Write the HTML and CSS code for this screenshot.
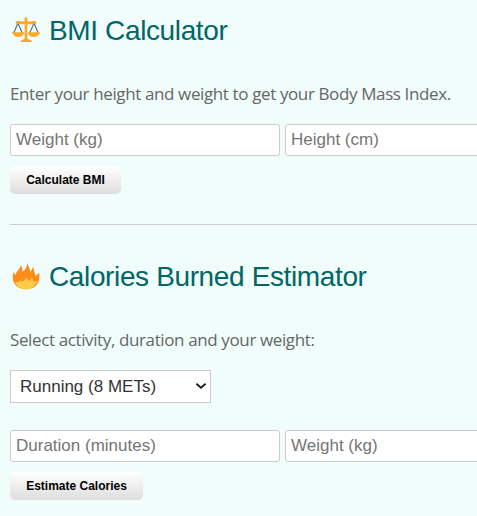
FILE: index.html
```html
<!DOCTYPE html>
<html lang="en">
<head>
<meta charset="utf-8">
<title>BMI Calculator</title>
<link rel="stylesheet" href="styles.css">
</head>
<body>
<section class="tool">
  <h2 class="title">
    <svg class="icon" viewBox="0 -1 30 30" aria-hidden="true">
      <g fill="none" stroke="#607580" stroke-width="1.2">
        <path d="M6.9 7 2.8 17M6.9 7 11.3 17M23.1 7 18.7 17M23.1 7 27.2 17"/>
      </g>
      <g fill="#ffa726">
        <path d="M13.6 2.6a1.4 1.4 0 0 1 2.8 0v2.6c3 .8 5-.5 8.2 0a1.3 1.3 0 0 1-.2 2.5c-3 0-5 1.2-8 .3V22.5c.5 1.6 4.6.6 4.6 3.6H9.5c0-3 3.6-2 4.1-3.6V8c-3 .9-5-.3-8-.3a1.3 1.3 0 0 1-.2-2.5c3.2-.5 5.2.8 8.2 0z"/>
        <path d="M1.5 16.3h11c.9 0 .9 1.5 0 1.8-.8 4-9.3 4-10.4 0-1.6-.3-1.4-1.8-.6-1.8zM17.5 16.3h11c.8 0 1 1.5-.6 1.8-1.1 4-9.6 4-10.4 0-.9-.3-.9-1.8 0-1.8z"/>
      </g>
    </svg>
    <span class="label">BMI Calculator</span>
  </h2>
  <p class="hint hint-bmi">Enter your height and weight to get your Body Mass Index.</p>
  <div class="fields">
    <input class="field" type="text" placeholder="Weight (kg)">
    <input class="field" type="text" placeholder="Height (cm)">
  </div>
  <button class="action action-bmi" type="button">Calculate BMI</button>
</section>
<hr class="rule">
<section class="tool">
  <h2 class="title">
    <svg class="icon" viewBox="0 0 30 30" aria-hidden="true">
      <path fill="#fb8c18" d="M16.6 1.2c-.5 3.6 2.8 5.5 2.7 9.6 1.5-.9 1.6-3.2 3.1-5.3-.4 3.7 1.8 6.3 1.9 9.2 1.4-.2 2.7-1.6 3.8-2.9.5 2.4.3 5-.1 7C27 24.7 21.8 28.2 15 28.2S3.2 24.5 2 19c-.6-3.1-.3-5.6.9-8.6.2 1.8.8 3 2.1 3.6C4.8 9.8 9.7 8.4 9.6 4c1.7 2 2 4.4 1.9 6.7 3.2-1.8 4.3-5.8 5.1-9.5z"/>
      <path fill="#ffca48" d="M4.1 20.9c2.4.5 4.4-.2 5.2-2 .4 1.2 1.2 1.7 2.4 1.4 1.8-.7 2.2-3 4.6-3.9-.3 1.8.6 2.8 1.7 3.4 1.2-.5 2-1.6 2.2-3.5 1.6 1.6 1.5 3.7 3.1 4.1 1 .2 2-.2 3.1-.9-1.5 5.3-5.9 8.7-11.3 8.7-5.5 0-9.5-3-11-7.3z"/>
    </svg>
    <span class="label">Calories Burned Estimator</span>
  </h2>
  <p class="hint hint-cal">Select activity, duration and your weight:</p>
  <div class="picker">
    <select class="activity"><option>Running (8 METs)</option></select>
    <svg class="chevron" viewBox="0 0 12 8" aria-hidden="true"><path d="M1.4 1.7 6 5.7l4.6-4"/></svg>
  </div>
  <div class="fields">
    <input class="field" type="text" placeholder="Duration (minutes)">
    <input class="field" type="text" placeholder="Weight (kg)">
  </div>
  <button class="action action-cal" type="button">Estimate Calories</button>
</section>
</body>
</html>
```
FILE: styles.css
```css
* { box-sizing: border-box; }
body {
  margin: 0;
  padding: 10px 0 0 10px;
  height: 516px;
  overflow: hidden;
  background: #f0fdfb;
  font-family: "Liberation Sans", Arial, sans-serif;
}
.title {
  display: flex;
  align-items: center;
  gap: 8px;
  height: 40px;
  margin: 0 0 30px;
  padding-left: 1px;
  color: #006666;
  font-size: 28px;
  font-weight: 400;
  line-height: 40px;
  letter-spacing: -0.37px;
  white-space: nowrap;
}
.label { padding-top: 2px; }
.icon { width: 30px; height: 30px; flex: none; }
.hint {
  height: 28px;
  margin: 0 0 16px;
  color: #666;
  font-family: "Open Sans", "Noto Sans", sans-serif;
  font-size: 17px;
  line-height: 28px;
  letter-spacing: -0.38px;
  white-space: nowrap;
}
.fields { display: flex; gap: 5px; }
.field {
  flex: none;
  width: 270px;
  height: 32px;
  padding: 0 5px;
  border: 1px solid #ccc;
  border-radius: 3px;
  background: #fff;
  font: 17px "Liberation Sans", Arial, sans-serif;
}
.field::placeholder { color: #757575; }
.action {
  display: block;
  height: 28px;
  margin-top: 10px;
  padding: 0;
  border: 0;
  border-radius: 5px;
  background: linear-gradient(#fff, #ddd);
  color: #000;
  font: bold 12px/28px "Liberation Sans", Arial, sans-serif;
}
.action-bmi { width: 111px; }
.action-cal { width: 133px; }
.rule {
  height: 1px;
  margin: 30px 0 31px;
  border: 0;
  background: #ccc;
}
.picker {
  position: relative;
  width: 201px;
  height: 33px;
  margin-bottom: 27px;
}
.activity {
  appearance: none;
  display: block;
  width: 100%;
  height: 100%;
  padding: 0 9px;
  border: 1px solid #ccc;
  border-radius: 0;
  background: #fff;
  color: #333;
  font: 17px "Liberation Sans", Arial, sans-serif;
}
.chevron {
  position: absolute;
  right: 4px;
  top: 12px;
  width: 12px;
  height: 8px;
  fill: none;
  stroke: #222;
  stroke-width: 2;
  pointer-events: none;
}
```
